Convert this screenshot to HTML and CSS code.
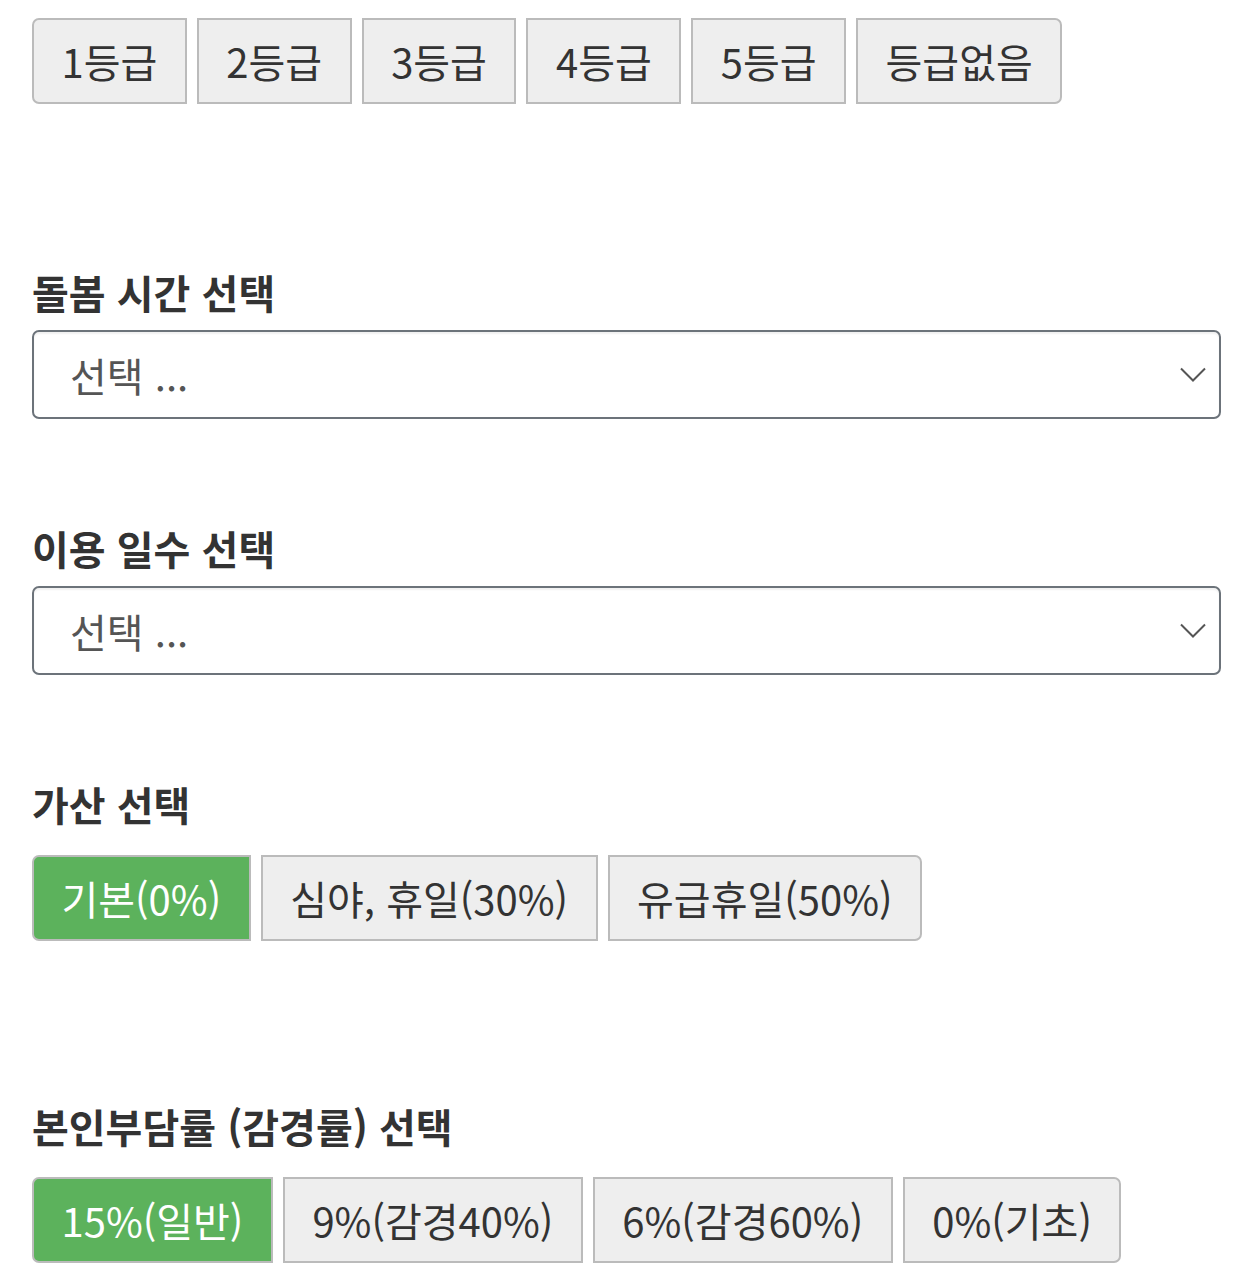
FILE: index.html
```html
<!DOCTYPE html>
<html lang="ko">
<head>
<meta charset="utf-8">
<title>요금 계산</title>
<link rel="stylesheet" href="styles.css">
</head>
<body>
<main class="page">
  <div class="btn-group group-first">
    <button class="btn">1등급</button>
    <button class="btn">2등급</button>
    <button class="btn">3등급</button>
    <button class="btn">4등급</button>
    <button class="btn">5등급</button>
    <button class="btn">등급없음</button>
  </div>

  <section class="field">
    <h2 class="field-title">돌봄 시간 선택</h2>
    <div class="select-wrap">
      <select class="select"><option>선택 ...</option></select>
      <svg class="chevron" viewBox="0 0 26 16" width="26" height="16"><path d="M1 1.5 L13 13.5 L25 1.5" fill="none" stroke="#555" stroke-width="2"/></svg>
    </div>
  </section>

  <section class="field">
    <h2 class="field-title">이용 일수 선택</h2>
    <div class="select-wrap">
      <select class="select"><option>선택 ...</option></select>
      <svg class="chevron" viewBox="0 0 26 16" width="26" height="16"><path d="M1 1.5 L13 13.5 L25 1.5" fill="none" stroke="#555" stroke-width="2"/></svg>
    </div>
  </section>

  <section class="field field-buttons">
    <h2 class="field-title">가산 선택</h2>
    <div class="btn-group">
      <button class="btn active">기본(0%)</button>
      <button class="btn">심야, 휴일(30%)</button>
      <button class="btn">유급휴일(50%)</button>
    </div>
  </section>

  <section class="field field-buttons">
    <h2 class="field-title">본인부담률 (감경률) 선택</h2>
    <div class="btn-group">
      <button class="btn active">15%(일반)</button>
      <button class="btn">9%(감경40%)</button>
      <button class="btn">6%(감경60%)</button>
      <button class="btn">0%(기초)</button>
    </div>
  </section>
</main>
</body>
</html>
```
FILE: styles.css
```css
html, body {
  margin: 0;
  padding: 0;
  background: #fff;
}
body {
  font-family: "Noto Sans CJK KR", "Noto Sans", sans-serif;
  color: #333;
}
.page {
  padding: 18px 32px 0 32px;
  display: flex;
  flex-direction: column;
}
.btn-group {
  display: flex;
  gap: 10px;
}
.btn {
  font-family: inherit;
  font-size: 40px;
  color: #333;
  background: #eee;
  border: 2px solid #bbb;
  border-radius: 0;
  height: 86px;
  padding: 0 27.5px;
  line-height: 1;
  cursor: pointer;
}
.btn:first-child {
  border-radius: 7px 0 0 7px;
}
.btn:last-child {
  border-radius: 0 7px 7px 0;
}
.btn.active {
  background: #5cb25c;
  color: #fff;
}
.group-first {
  margin-bottom: 160px;
}
.field {
  display: flex;
  flex-direction: column;
  margin-bottom: 101px;
}
.field-buttons {
  margin-bottom: 157px;
}
.field-buttons:last-child {
  margin-bottom: 0;
}
.field-buttons .btn-group {
  margin-top: 13px;
}
.field-title {
  margin: 0 0 10px 0;
  font-size: 40px;
  font-weight: 700;
  line-height: 1.4;
  color: #333;
}
.select-wrap {
  position: relative;
}
.select {
  appearance: none;
  -webkit-appearance: none;
  width: 100%;
  height: 89px;
  font-family: inherit;
  font-size: 40px;
  color: #555;
  background: #fff;
  border: 2px solid #6c737a;
  border-radius: 7px;
  box-shadow: inset 0 2px 2px rgba(0, 0, 0, 0.06);
  padding: 0 36px;
  box-sizing: border-box;
}
.chevron {
  position: absolute;
  right: 15px;
  top: 37px;
  pointer-events: none;
}
```
